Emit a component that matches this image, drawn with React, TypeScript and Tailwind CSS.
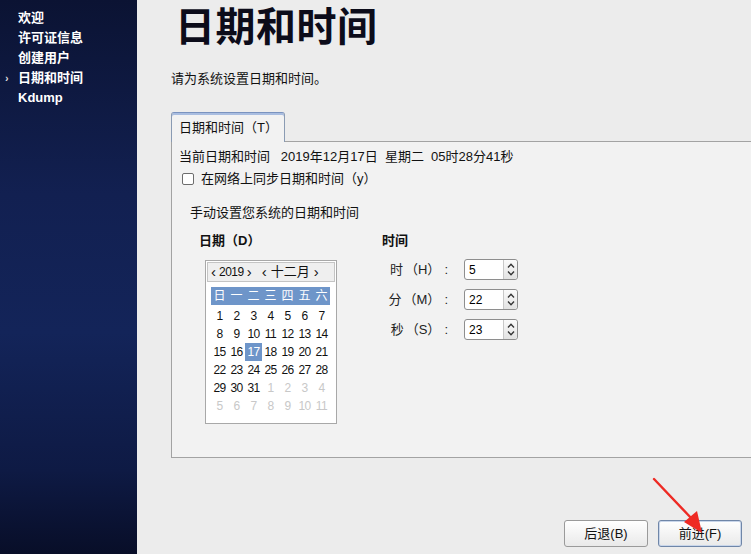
import React from "react";

const cjk = "font-['Liberation_Sans','Noto_Sans_CJK_SC',sans-serif]";

const navItems = ["欢迎", "许可证信息", "创建用户", "日期和时间", "Kdump"];

const weekdays = ["日", "一", "二", "三", "四", "五", "六"];

// 2019年12月：1号是星期日
const days: { n: number; muted: boolean }[] = [
  ...Array.from({ length: 31 }, (_, i) => ({ n: i + 1, muted: false })),
  ...Array.from({ length: 11 }, (_, i) => ({ n: i + 1, muted: true })),
];

function Chevron({ dir }: { dir: "up" | "down" }) {
  return (
    <svg viewBox="0 0 8 5" className="h-[5px] w-[8px]" aria-hidden="true">
      <path
        d={dir === "up" ? "M1 4.5L4 1.2 7 4.5" : "M1 0.5L4 3.8 7 0.5"}
        fill="none"
        stroke="#333"
        strokeWidth="1.3"
      />
    </svg>
  );
}

function SpinBox({ value }: { value: string }) {
  return (
    <div className="flex h-[21px] w-[54px] rounded-[3px] border border-[#8e8e8e] bg-white">
      <div className="flex-1 pl-[4px] text-[12px] leading-[20px] text-black">
        {value}
      </div>
      <div className="flex w-[14px] flex-col items-center justify-center gap-[3px] rounded-r-[3px] border-l border-[#c8c8c8] bg-gradient-to-b from-[#fbfbfb] to-[#e2e2e2]">
        <Chevron dir="up" />
        <Chevron dir="down" />
      </div>
    </div>
  );
}

function TimeRow({ name, key2, value }: { name: string; key2: string; value: string }) {
  return (
    <div className="flex items-center">
      <span className="flex w-[82px] justify-end pr-[16px] text-[13px] text-[#222]">
        <span>{name}</span>
        <span className="ml-[2px]">（{key2}）</span>
        <span className="ml-[4px]">:</span>
      </span>
      <SpinBox value={value} />
    </div>
  );
}

function Button({ label, focused }: { label: string; focused?: boolean }) {
  return (
    <button
      type="button"
      className={[
        "h-[27px] w-[84px] rounded-[3px] border bg-gradient-to-b from-white to-[#e9e9e9] text-[13px] text-[#111]",
        focused ? "border-[#6f86a8] shadow-[inset_0_0_0_1px_#c9d6ea]" : "border-[#9a9a9a]",
      ].join(" ")}
    >
      {label}
    </button>
  );
}

export default function App() {
  return (
    <div className={`relative flex h-[554px] w-[751px] overflow-hidden ${cjk}`}>
      <aside className="w-[137px] shrink-0 bg-[linear-gradient(180deg,#0b1333_0%,#122051_35%,#132459_60%,#0e1a44_85%,#080e28_100%)] pt-[9px]">
        <ul className="space-y-[2px]">
          {navItems.map((item) => (
            <li
              key={item}
              className="relative h-[18px] pl-[18px] text-[13px] font-bold leading-[18px] text-white"
            >
              {item === "日期和时间" && (
                <span className="absolute left-[5px] top-0 text-[11px] text-[#ddd]">
                  ›
                </span>
              )}
              {item}
            </li>
          ))}
        </ul>
      </aside>

      <main className="flex flex-1 flex-col bg-[#ececec] pl-[34px]">
        <h1 className="ml-[4px] mt-[3px] text-[40px] font-bold leading-[48px] tracking-[0.5px] text-[#0c0c1a]">
          日期和时间
        </h1>
        <p className="mt-[20px] text-[13px] leading-[16px] text-[#111]">
          请为系统设置日期和时间。
        </p>

        <div className="mt-[25px] flex">
          <div className="relative z-10 -mb-px h-[30px] w-[114px] rounded-t-[3px] border border-b-0 border-[#8a9bb3] border-t-[#7a93bf] bg-[#f2f2f2] pl-[7px] text-[13px] leading-[30px] text-[#111] shadow-[inset_0_2px_0_#a9bde0]">
            日期和时间（T）
          </div>
        </div>
        <section className="h-[317px] border border-r-0 border-[#a3a3a3] bg-[#f2f2f2] pl-[7px] pt-[6px]">
          <div className="text-[13px] leading-[18px] text-[#111]">
            当前日期和时间&nbsp;&nbsp;&nbsp;2019年12月17日&nbsp;&nbsp;星期二&nbsp;&nbsp;05时28分41秒
          </div>
          <label className="mt-[4px] flex items-center gap-[7px] pl-[3px] text-[13px] leading-[18px] text-[#111]">
            <span className="h-[12px] w-[12px] rounded-[2px] border border-[#6d6d6d] bg-white" />
            在网络上同步日期和时间（y）
          </label>

          <div className="mt-[16px] pl-[11px] text-[13px] leading-[18px] text-[#111]">
            手动设置您系统的日期和时间
          </div>

          <div className="mt-[10px] flex pl-[20px]">
            <div className="w-[183px]">
              <div className="text-[13px] font-bold leading-[18px] text-[#111]">
                日期（D）
              </div>
              <div className="ml-[6px] mt-[10px] h-[164px] w-[132px] border border-[#a8a8a8] bg-white">
                <div className="mx-[1px] mt-[1px] flex h-[20px] items-center border border-[#c4c4c4] bg-[#efefef] px-[3px] text-[12px] text-[#111]">
                  <span className="text-[15px] leading-[18px]">‹</span>
                  <span className="mx-[3px] tracking-[-0.5px]">2019</span>
                  <span className="text-[15px] leading-[18px]">›</span>
                  <span className="ml-[10px] text-[15px] leading-[18px]">‹</span>
                  <span className="mx-[4px] text-[13px]">十二月</span>
                  <span className="text-[15px] leading-[18px]">›</span>
                </div>
                <div className="ml-[5px] mt-[5px] grid w-[119px] grid-cols-7 bg-[#6e95c9] text-center text-[12px] leading-[18px] text-white">
                  {weekdays.map((d) => (
                    <span key={d}>{d}</span>
                  ))}
                </div>
                <div className="ml-[5px] mt-[2px] grid w-[119px] grid-cols-7 text-center text-[12px] leading-[18px] tracking-[-0.6px]">
                  {days.map((d, i) => (
                    <span
                      key={i}
                      className={
                        d.muted
                          ? "text-[#c8c8c8]"
                          : d.n === 17
                            ? "bg-[#6e95c9] text-white"
                            : "text-[#111]"
                      }
                    >
                      {d.n}
                    </span>
                  ))}
                </div>
              </div>
            </div>

            <div>
              <div className="text-[13px] font-bold leading-[18px] text-[#111]">
                时间
              </div>
              <div className="mt-[9px] space-y-[9px]">
                <TimeRow name="时" key2="H" value="5" />
                <TimeRow name="分" key2="M" value="22" />
                <TimeRow name="秒" key2="S" value="23" />
              </div>
            </div>
          </div>
        </section>

        <div className="mt-auto flex justify-end gap-[10px] pb-[7px] pr-[9px]">
          <Button label="后退(B)" />
          <Button label="前进(F)" focused />
        </div>
      </main>

      <svg
        className="pointer-events-none absolute left-[650px] top-[475px] h-[62px] w-[60px]"
        viewBox="0 0 60 62"
        aria-hidden="true"
      >
        <path d="M4 4L43 45" stroke="#ee2a24" strokeWidth="2.4" strokeLinecap="round" />
        <path d="M52 58L34 47 47 36Z" fill="#ee2a24" />
      </svg>
    </div>
  );
}
